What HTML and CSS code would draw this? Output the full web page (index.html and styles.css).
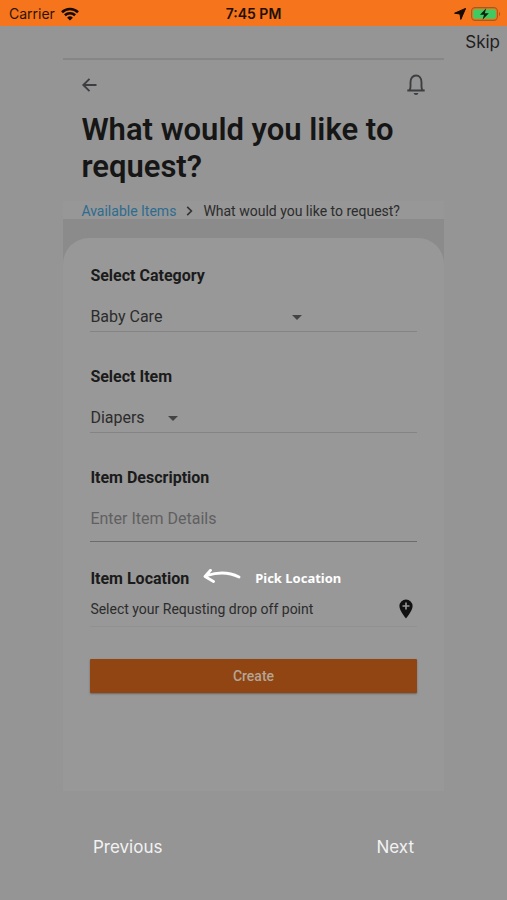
FILE: index.html
```html
<!DOCTYPE html>
<html lang="en">
<head>
<meta charset="utf-8">
<meta name="viewport" content="width=device-width, initial-scale=1">
<title>Request an item</title>
<link rel="stylesheet" href="styles.css">
</head>
<body>
<header class="status">
  <div class="status-side">
    <span>Carrier</span>
    <svg width="18" height="14" viewBox="0 0 18 14" aria-hidden="true"><g fill="none" stroke="#160a02" stroke-width="2.6"><path d="M1 5.2a11.5 11.5 0 0 1 16 0"/><path d="M3.9 8.3a7.3 7.3 0 0 1 10.2 0"/></g><path d="M9 13.6 6.1 10.7a4.1 4.1 0 0 1 5.8 0Z" fill="#160a02"/></svg>
  </div>
  <span class="time">7:45 PM</span>
  <div class="status-side status-end">
    <svg width="12" height="12" viewBox="0 0 12 12" aria-hidden="true"><path d="M11.600.4 6.800 11.400 6 6 .6 5.200Z" fill="#160a02" stroke="#160a02" stroke-width="1" stroke-linejoin="round"/></svg>
    <svg width="30" height="14" viewBox="0 0 30 14" aria-hidden="true"><rect x=".6" y=".6" width="25.8" height="12.8" rx="3.6" fill="none" stroke="#a35a22" stroke-width="1.1"/><rect x="2.2" y="2.2" width="22.6" height="9.6" rx="2" fill="#3fcb62"/><path d="M28 4.8c1.5.7 1.5 3.700 0 4.400Z" fill="#a35a22"/><path d="m15.200 1.200-6.200 6.500h4l-1.500 5.100 6.300-6.600h-4Z" fill="#10200f"/></svg>
  </div>
</header>
<div class="skip-row"><button class="link-button skip" type="button">Skip</button></div>
<main class="screen">
  <div class="toolbar">
    <button class="icon-button" type="button" aria-label="Back"><svg width="16" height="16" viewBox="0 0 16 16"><path d="M15.500 8H2M8.500 1.800 2.300 8l6.200 6.200" fill="none" stroke="#3c3e41" stroke-width="1.900"/></svg></button>
    <button class="icon-button" type="button" aria-label="Notifications"><svg width="20" height="22" viewBox="0 0 20 22"><path d="M1.300 16.500h17.400M3.300 16.200c1-1 1.200-2 1.200-3.500V8.200C4.500 4.300 6.700 1.500 10 1.500s5.500 2.800 5.500 6.700v4.500c0 1.500.2 2.500 1.200 3.500" fill="none" stroke="#3c3e41" stroke-width="1.900"/><path d="M7.600 19h4.800c-.3 1.300-1.200 2-2.400 2s-2.100-.7-2.400-2Z" fill="#3c3e41"/></svg></button>
  </div>
  <h1>What would you like to request?</h1>
  <nav class="crumbs" aria-label="Breadcrumb">
    <a href="#items">Available Items</a>
    <svg width="7" height="10" viewBox="0 0 7 10" aria-hidden="true"><path d="m1.200.9 4.200 4.100-4.200 4.100" fill="none" stroke="#333" stroke-width="1.600"/></svg>
    <span>What would you like to request?</span>
  </nav>
  <div class="panel">
    <form class="card">
      <div class="field">
        <label for="category">Select Category</label>
        <div class="line">
          <div class="picker wide">
            <select id="category"><option>Baby Care</option></select>
            <svg width="10" height="5" viewBox="0 0 10 5" aria-hidden="true"><path d="M0 0h10L5 5Z" fill="#444"/></svg>
          </div>
        </div>
      </div>
      <div class="field">
        <label for="item">Select Item</label>
        <div class="line">
          <div class="picker">
            <select id="item"><option>Diapers</option></select>
            <svg width="10" height="5" viewBox="0 0 10 5" aria-hidden="true"><path d="M0 0h10L5 5Z" fill="#444"/></svg>
          </div>
        </div>
      </div>
      <div class="field details">
        <label for="description">Item Description</label>
        <input id="description" type="text" placeholder="Enter Item Details">
      </div>
      <div class="location">
        <div class="location-head">
          <h2>Item Location</h2>
          <svg width="38" height="18" viewBox="0 0 38 18" aria-hidden="true"><path d="M36 8C27 3.500 15 3 4 6.500M7.500 1.300 2 7.500l8.500 5" fill="none" stroke="#fff" stroke-width="2.800" stroke-linecap="round" stroke-linejoin="round"/></svg>
          <span class="tip">Pick Location</span>
        </div>
        <div class="location-row">
          <span>Select your Requsting drop off point</span>
          <button class="icon-button" type="button" aria-label="Pick location"><svg width="14" height="20" viewBox="0 0 14 20"><path d="M7 .5a6.600 6.600 0 0 0-6.600 6.600C.4 12 7 19.500 7 19.500S13.600 12 13.600 7.100A6.600 6.600 0 0 0 7 .5Z" fill="#111"/><path d="M7 3.500v7M3.500 7h7" stroke="#999" stroke-width="1.600"/></svg></button>
        </div>
      </div>
      <button class="create" type="button">Create</button>
    </form>
  </div>
</main>
<footer class="pager">
  <button class="link-button" type="button">Previous</button>
  <button class="link-button" type="button">Next</button>
</footer>
</body>
</html>
```
FILE: styles.css
```css
* { box-sizing: border-box; }
body {
  margin: 0;
  min-height: 100vh;
  background: #959595;
  color: #2c2c2c;
  font: 16px/20px Roboto, sans-serif;
}
button, select, input {
  font: inherit;
  color: inherit;
  border: 0;
  border-radius: 0;
  padding: 0;
  background: none;
}
svg { display: block; flex: none; }
h1, h2 { margin: 0; }

.status {
  display: grid;
  grid-template-columns: 1fr auto 1fr;
  align-items: center;
  height: 26px;
  padding: 2px 6px 0;
  background: #f5741c;
  color: #2b1407;
  font: 14px/20px Inter, sans-serif;
}
.status-side { display: flex; align-items: center; gap: 6px; padding-left: 3px; }
.status-end { justify-content: flex-end; gap: 5px; }
.time { font-weight: 600; color: #220f04; }

.skip-row { display: flex; justify-content: flex-end; padding: 6px 7px; }
.link-button { color: #f2f2f2; font: 17px/20px Inter, sans-serif; }
.skip { color: #1e1e1e; }

.screen {
  width: 75%;
  margin: 0 auto;
  border-top: 2px solid #868686;
}
.toolbar {
  display: flex;
  align-items: center;
  justify-content: space-between;
  height: 50px;
  padding: 0 18px;
}
h1 {
  padding: 1px 18px 0;
  color: #161616;
  font-size: 31px;
  line-height: 37px;
  font-weight: 600;
}
.crumbs {
  display: flex;
  align-items: center;
  gap: 10px;
  height: 18px;
  margin-top: 16px;
  padding: 1px 18px 0;
  background: #979797;
  font-size: 14px;
  white-space: nowrap;
}
.crumbs a { color: #2d6c8f; text-decoration: none; }

.panel { padding-top: 19px; background: #8b8b8b; }
.card {
  padding: 28px 27px 98px;
  border-radius: 26px 26px 0 0;
  background: #989898;
}
.field { margin-bottom: 35px; }
.field label, h2 {
  display: block;
  color: #1b1b1b;
  font-size: 16px;
  line-height: 20px;
  font-weight: 700;
}
.line, .field input {
  margin-top: 15px;
  border-bottom: 1px solid #848484;
}
.picker {
  display: grid;
  grid-template-columns: 1fr auto;
  align-items: center;
  width: 27%;
  height: 30px;
  padding-top: 2px;
}
.picker.wide { width: 65%; }
.picker select {
  grid-area: 1 / 1 / 2 / 3;
  appearance: none;
  height: 28px;
}
.picker svg { grid-area: 1 / 2; pointer-events: none; }
.details { margin-bottom: 27px; }
.field input {
  display: block;
  width: 100%;
  height: 39px;
  padding-bottom: 7px;
  border-bottom-color: #6c6c6c;
}
.field input::placeholder { color: #606060; opacity: 1; }

.location-head { display: flex; align-items: flex-start; gap: 14px; height: 20px; }
.tip { color: #fff; font: bold 13px/18px "Noto Sans", sans-serif; }
.location-row {
  display: flex;
  justify-content: space-between;
  align-items: center;
  margin-top: 8px;
  padding: 0 4px 5px 0;
  height: 30px;
  border-bottom: 1px solid #919191;
  font-size: 14px;
}
.create {
  display: block;
  width: 100%;
  height: 34px;
  margin-top: 32px;
  border-radius: 1px;
  background: #904512;
  box-shadow: 0 1px 2px #666;
  color: #b5a598;
  font-size: 14px;
  font-weight: 500;
}

.pager {
  display: flex;
  justify-content: space-between;
  padding: 46px 93px 44px;
}
```
